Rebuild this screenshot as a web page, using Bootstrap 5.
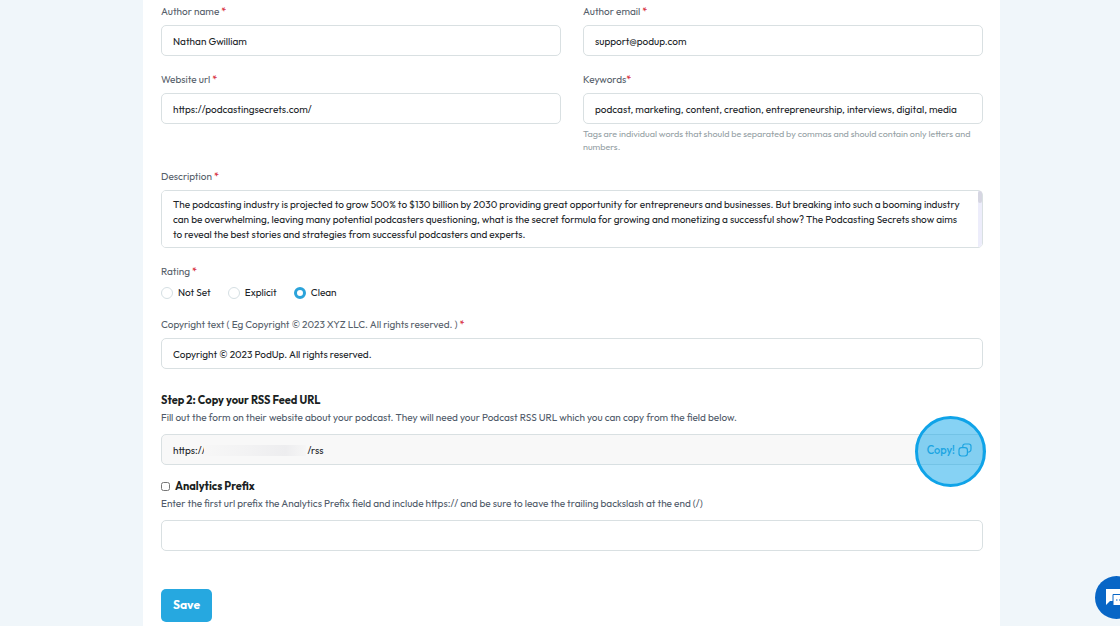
<!DOCTYPE html>
<html lang="en">
<head>
<meta charset="utf-8">
<meta name="viewport" content="width=device-width, initial-scale=1">
<title>Podcast settings</title>
<link rel="stylesheet" href="https://cdn.jsdelivr.net/npm/bootstrap@5.3.0/dist/css/bootstrap.min.css">
<style>
body{background:#f0f6fa;color:#212529;font-family:Outfit,Lato,sans-serif;font-size:10px;line-height:16px}
.page{padding-left:143px;padding-right:120px}
.panel{padding:4px 17px 4px 18px;min-height:100vh}
.pair{--bs-gutter-x:22px;--bs-gutter-y:16px}
.gap-field{margin-top:16px}
.form-label{display:block;color:#56606a;margin-bottom:5px}
.req{color:#d6283b;font-weight:500}
.form-control{height:31px;padding:1px 11px 0;font-size:10px;line-height:15px;color:#212529;border:1px solid #d9e0e2;border-radius:5px}
textarea.form-control{height:58px;padding:6px 16px 6px 11px;resize:none;overflow-y:scroll;scrollbar-width:none}
.scroll-track{top:1px;right:1px;bottom:1px;width:4px;background:#ededfb;border-radius:0 4px 4px 0}
.scroll-thumb{height:12px;background:#d6d6e2;border-radius:3px}
.hint{margin-top:3px;font-size:9px;line-height:13px;color:#939ea3}
.rating{gap:17px}
.rating label{gap:5px}
.rating input{margin:0;width:12px;height:12px;border:1px solid #d5dfe3}
.rating input:checked{background:#fff;border:3px solid #2ba3da}
.step{font-size:11px;line-height:18px;font-weight:700;color:#1b1f23;margin:0}
.step-two{margin-top:22px}
.note{color:#4f5a69;line-height:18px;margin:0 0 7px}
.feed{height:31px;background:#f8f8f8;border:1px solid #d9e0e2;border-radius:5px}
.feed .form-control{height:29px;border:0;background:transparent}
.redacted{left:42px;top:10px;width:102px;height:11px;background:linear-gradient(90deg,#f7f7f7,#f2f2f3 45%,#ededef 80%,#f6f6f6)}
.copy{padding:0 10px 0 0;gap:3px;border:0;background:none;color:#2ba3da;font-size:11px;font-weight:500}
.spot{width:71px;height:71px;right:-4px;top:-19px;border:3px solid #0fa3e8;border-radius:50%;background:rgba(14,165,233,.5);pointer-events:none}
.prefix{margin-top:12px;gap:5px}
.prefix input{width:9px;height:9px;margin:0}
.save{height:33px;margin-top:38px;padding:0 12px 2px;font-size:12px;font-weight:700;color:#fff;background:#26a8e0;border:0;border-radius:5px}
.save:hover{background:#1b95ca;color:#fff}
.chat{width:43px;height:43px;right:-18px;bottom:7px;border:0;background:#0866c6;padding:0 0 0 10px}
</style>
</head>
<body>
<div class="page">
<main class="panel bg-white">
<form>
  <div class="row pair">
    <div class="col-6"><label class="form-label" for="author">Author name <span class="req">*</span></label><input class="form-control" id="author" value="Nathan Gwilliam"></div>
    <div class="col-6"><label class="form-label" for="email">Author email <span class="req">*</span></label><input class="form-control" id="email" type="email" value="support@podup.com"></div>
    <div class="col-6"><label class="form-label" for="site">Website url <span class="req">*</span></label><input class="form-control" id="site" value="https://podcastingsecrets.com/"></div>
    <div class="col-6"><label class="form-label" for="keywords">Keywords<span class="req">*</span></label><input class="form-control" id="keywords" value="podcast, marketing, content, creation, entrepreneurship, interviews, digital, media">
      <div class="hint">Tags are individual words that should be separated by commas and should contain only letters and numbers.</div></div>
  </div>
  <div class="gap-field"><label class="form-label" for="desc">Description <span class="req">*</span></label>
  <div class="position-relative">
  <textarea class="form-control" id="desc">The podcasting industry is projected to grow 500% to $130 billion by 2030 providing great opportunity for entrepreneurs and businesses. But breaking into such a booming industry can be overwhelming, leaving many potential podcasters questioning, what is the secret formula for growing and monetizing a successful show? The Podcasting Secrets show aims to reveal the best stories and strategies from successful podcasters and experts.</textarea>
  <div class="scroll-track position-absolute"><div class="scroll-thumb"></div></div>
  </div></div>
  <div class="gap-field" role="radiogroup" aria-labelledby="rating"><div class="form-label" id="rating">Rating <span class="req">*</span></div>
    <div class="rating d-flex">
      <label class="d-flex align-items-center"><input class="form-check-input" type="radio" name="rating">Not Set</label>
      <label class="d-flex align-items-center"><input class="form-check-input" type="radio" name="rating">Explicit</label>
      <label class="d-flex align-items-center"><input class="form-check-input" type="radio" name="rating" checked>Clean</label>
    </div></div>
  <div class="gap-field"><label class="form-label" for="copyright">Copyright text ( Eg Copyright © 2023 XYZ LLC. All rights reserved. ) <span class="req">*</span></label><input class="form-control" id="copyright" value="Copyright © 2023 PodUp. All rights reserved."></div>

  <h2 class="step step-two">Step 2: Copy your RSS Feed URL</h2>
  <p class="note">Fill out the form on their website about your podcast. They will need your Podcast RSS URL which you can copy from the field below.</p>
  <div class="feed d-flex align-items-center position-relative">
    <input class="form-control flex-fill" aria-label="RSS feed URL" readonly value="https://&emsp;&emsp;&emsp;&emsp;&emsp;&emsp;&emsp;&emsp;&emsp;&emsp;&thinsp;/rss">
    <span class="redacted position-absolute"></span>
    <button class="copy d-flex align-items-center" type="button">Copy!
      <svg width="14" height="14" viewBox="0 0 14 14" fill="none" stroke="currentColor" stroke-width="1.2"><rect x="1" y="4.6" width="8.4" height="8.4" rx="2.4"/><path d="M4.8 4.6V3.2Q4.8 1 7 1h3.8Q13 1 13 3.2V6q0 3.2-3.6 3.2"/></svg>
    </button>
    <span class="spot position-absolute"></span>
  </div>
  <div class="prefix d-flex align-items-center"><input type="checkbox" id="useprefix"><label class="step" for="useprefix">Analytics Prefix</label></div>
  <p class="note">Enter the first url prefix the Analytics Prefix field and include https:// and be sure to leave the trailing backslash at the end (/)</p>
  <input class="form-control" aria-label="Analytics prefix">
  <button class="btn save" type="submit">Save</button>
</form>
</main>
</div>
<button class="chat position-fixed rounded-circle d-flex align-items-center" type="button" aria-label="Chat">
  <svg class="flex-shrink-0" width="26" height="20" viewBox="0 0 26 20"><path d="M1 1h15v12H5l-4 4z" fill="#fff"/><path d="M8 6.500h14v13l-3-2H8z" fill="#fff" stroke="#0866c6"/><path d="M11 12h1.500M14 12h1.500M17 12h1.500" stroke="#0866c6"/></svg>
</button>
<script src="https://cdn.jsdelivr.net/npm/bootstrap@5.3.0/dist/js/bootstrap.bundle.min.js"></script>
</body>
</html>
